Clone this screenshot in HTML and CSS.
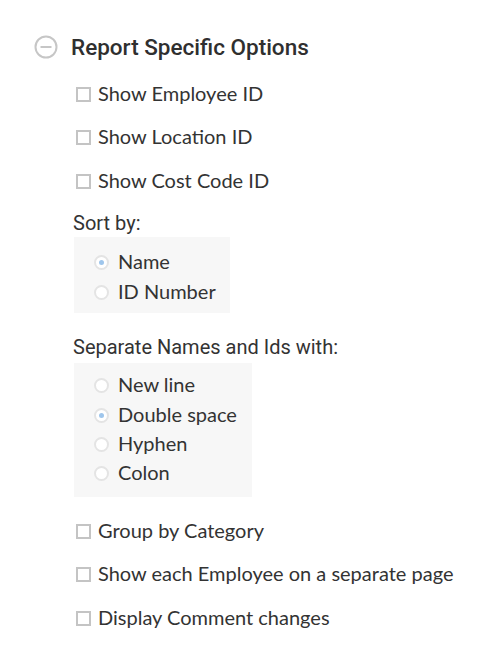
FILE: index.html
```html
<!DOCTYPE html>
<html>
<head>
<meta charset="utf-8">
<link rel="stylesheet" href="styles.css">
</head>
<body>
<div class="panel">
  <div class="heading">
    <svg class="toggle" width="24" height="24" viewBox="0 0 24 24">
      <circle cx="12" cy="12" r="10.5" fill="none" stroke="#c6c6c6" stroke-width="2"/>
      <line x1="6.5" y1="12" x2="17.5" y2="12" stroke="#c6c6c6" stroke-width="2"/>
    </svg>
    <span class="title">Report Specific Options</span>
  </div>
  <div class="body">
    <label class="check"><span class="box"></span>Show Employee ID</label>
    <label class="check"><span class="box"></span>Show Location ID</label>
    <label class="check"><span class="box"></span>Show Cost Code ID</label>

    <div class="group-label">Sort by:</div>
    <div class="radios r1">
      <label class="radio"><span class="dot on"></span>Name</label>
      <label class="radio"><span class="dot"></span>ID Number</label>
    </div>

    <div class="group-label g2">Separate Names and Ids with:</div>
    <div class="radios r2">
      <label class="radio"><span class="dot"></span>New line</label>
      <label class="radio"><span class="dot on"></span>Double space</label>
      <label class="radio"><span class="dot"></span>Hyphen</label>
      <label class="radio"><span class="dot"></span>Colon</label>
    </div>

    <label class="check c-after"><span class="box"></span>Group by Category</label>
    <label class="check"><span class="box"></span>Show each Employee on a separate page</label>
    <label class="check"><span class="box"></span>Display Comment changes</label>
  </div>
</div>
</body>
</html>
```

FILE: styles.css
```css
html, body {
  margin: 0;
  padding: 0;
  background: #ffffff;
}
.panel {
  padding: 35px 0 0 34px;
  color: #333333;
}
.heading {
  display: flex;
  align-items: center;
  height: 24px;
  gap: 13px;
}
.toggle {
  flex: none;
}
.title {
  font-family: Roboto, "Liberation Sans", sans-serif;
  font-weight: 500;
  font-size: 22.5px;
  color: #2f2f2f;
}
.body {
  display: flex;
  flex-direction: column;
  align-items: flex-start;
  padding-left: 39px;
  padding-top: 12px;
}
.check {
  display: flex;
  align-items: center;
  height: 43.5px;
  font-family: Lato, "Open Sans", sans-serif;
  font-size: 20px;
  color: #333333;
}
.box {
  display: inline-block;
  width: 11px;
  height: 11px;
  border: 2px solid #c4c4c4;
  background: #fff;
  margin-left: 3px;
  margin-right: 7px;
  margin-top: 3px;
  flex: none;
}
.group-label {
  font-family: Roboto, "Liberation Sans", sans-serif;
  font-size: 20px;
  color: #333333;
  height: 24px;
  line-height: 24px;
  margin-top: 9px;
}
.group-label.g2 {
  margin-top: 22px;
}
.radios {
  background: #f7f7f7;
  margin-top: 2px;
  padding: 9px 14px 7px 20px;
  display: flex;
  flex-direction: column;
  margin-left: 1px;
}
.r2 {
  padding: 7px 15px 10px 20px;
  margin-top: 4px;
}
.radio {
  display: flex;
  align-items: center;
  height: 30px;
  font-family: Lato, "Open Sans", sans-serif;
  font-size: 20px;
  color: #333333;
}
.r2 .radio {
  height: 29.4px;
}
.dot {
  width: 11px;
  height: 11px;
  border: 2px solid #e4e4e4;
  border-radius: 50%;
  background: #ffffff;
  margin-right: 9px;
  position: relative;
  flex: none;
  margin-top: 3px;
}
.dot.on::after {
  content: "";
  position: absolute;
  left: 3px;
  top: 3px;
  width: 5px;
  height: 5px;
  border-radius: 50%;
  background: #9fc6ec;
}
.c-after {
  margin-top: 11px;
}
```
